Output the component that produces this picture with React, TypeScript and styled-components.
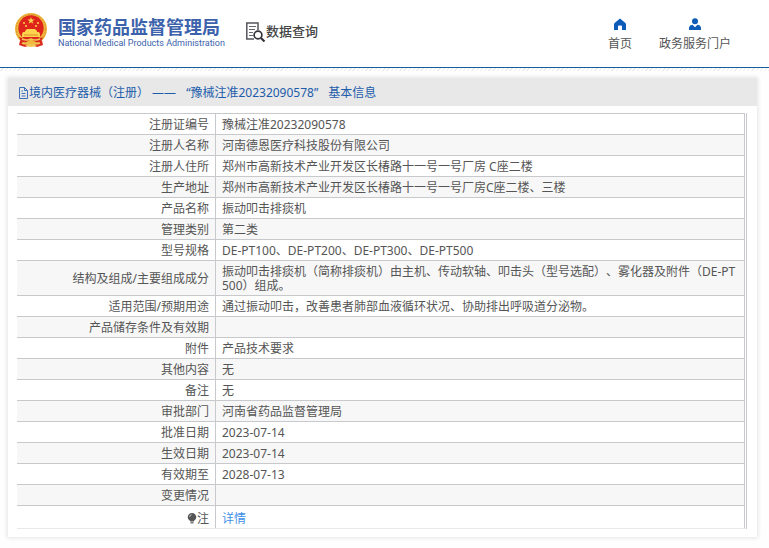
import React from "react";
import styled, { createGlobalStyle } from "styled-components";

const GlobalStyle = createGlobalStyle`
  * { box-sizing: border-box; }
  body {
    margin: 0;
    background: #fefefe;
    color: #555;
    font: 12px/14px "Noto Sans", "Noto Sans CJK SC", sans-serif;
    text-spacing-trim: space-all;
  }
`;

const Header = styled.header`
  display: flex;
  align-items: flex-start;
  height: 68px;
  background: #fff;
  border-bottom: 1px solid #14609f;
`;

const Hatch = styled.div`
  height: 3px;
  margin-bottom: 7px;
  background: repeating-linear-gradient(135deg, #fff 0 2px, #ececea 2px 3px);
`;

const Brand = styled.a`
  display: flex;
  gap: 10px;
  padding: 12px 0 0 14px;
  color: #3c62ab;
  text-decoration: none;
`;

const BrandText = styled.span`
  display: flex;
  flex-direction: column;
  padding-top: 3px;
`;

const BrandName = styled.strong`
  font: 700 18px/22px "Noto Sans CJK SC", sans-serif;
  white-space: nowrap;
`;

const BrandSub = styled.span`
  font: 400 9px/13px Roboto, sans-serif;
  white-space: nowrap;
`;

const Section = styled.h1`
  display: flex;
  align-items: center;
  margin: 20px 0 0 20px;
  color: #444;
  font: 500 13px/22px "Noto Sans CJK SC", sans-serif;
`;

const Nav = styled.nav`
  display: flex;
  gap: 27px;
  margin: 18px 38px 0 auto;
`;

const NavLink = styled.a`
  display: flex;
  flex-direction: column;
  align-items: center;
  gap: 7px;
  color: #555;
  text-decoration: none;
`;

const Card = styled.main`
  margin: 0 12px 11px 8px;
  background: #fff;
  box-shadow: 0 0 4px 1px #e4e4e4;
`;

const CardTitle = styled.h2`
  display: flex;
  align-items: center;
  height: 28px;
  margin: 0;
  padding: 2px 10px 0;
  background: #e8e8e8;
  color: #1c5cab;
  font: inherit;
`;

const RecordNumber = styled.span`
  margin: 0 10px;
`;

const CardBody = styled.div`
  padding: 7px 10px 8px 9px;
`;

const Table = styled.table`
  width: 100%;
  border-collapse: separate;
  border-spacing: 0;
  border-right: 3px double #c8c9cc;
  border-bottom: 1px solid #e9e9ec;
`;

const Row = styled.tr`
  &:nth-child(even) { background: #f7f7f7; }
  &:last-child > * { padding-top: 6px; }
`;

const Label = styled.th`
  width: 199px;
  padding: 4px 6px 2px;
  border-top: 1px solid #c8c9cc;
  border-right: 1px solid #c8c9cc;
  font-weight: 400;
  text-align: right;
`;

const Value = styled.td`
  padding: 4px 6px 2px;
  border-top: 1px solid #c8c9cc;
  word-break: break-all;
`;

const DetailLink = styled.a`
  color: #3f8fe8;
  text-decoration: none;
`;

const BulbIcon = styled.svg`
  vertical-align: -1px;
`;

const Emblem = () => (
  <svg width="34" height="36" viewBox="0 0 34 36" aria-hidden="true">
    <path d="M7 24 5 33l6 2 6-2 6 2 6-2-2-9z" fill="#d92b20" />
    <circle cx="17" cy="17" r="16" fill="#efb83c" />
    <circle cx="17" cy="16" r="12.7" fill="#de241b" />
    <circle cx="17" cy="17" r="14.7" fill="none" stroke="#d9922c" strokeWidth="1" strokeDasharray="2 1" />
    <path d="m17 5 .9 2.6h2.7l-2.2 1.6.9 2.6-2.3-1.6-2.3 1.6.9-2.6-2.2-1.6h2.7z" fill="#ffd34d" />
    <g fill="#ffd34d">
      <circle cx="10" cy="11" r="1" />
      <circle cx="12" cy="14" r="1" />
      <circle cx="22" cy="14" r="1" />
      <circle cx="24" cy="11" r="1" />
      <path d="m11 19 2-2h8l2 2v1H11zM8 22l1-2h16l1 2v3H8z" />
    </g>
    <path d="M10 23h14" stroke="#d9922c" strokeWidth="1" />
    <path d="M5 25q6 3 12 1 6 2 12-1l-2 5q-5 1-7-1l-3 2-3-2q-2 2-7 1z" fill="#d92b20" />
    <path d="M8 27q5 2 9 0 4 2 9 0M8 31q5 2 7-1h4q2 3 7 1" fill="none" stroke="#f3c654" strokeWidth="1.6" />
    <circle cx="17" cy="30" r="2.6" fill="#efb83c" />
    <path d="m11 34 3-2h6l3 2-6 1z" fill="#f3c654" />
  </svg>
);

const QueryIcon = () => (
  <svg width="21" height="21" viewBox="0 0 21 21" fill="none" aria-hidden="true">
    <path d="M9 18H1.800V2H13v7" stroke="#55555f" strokeWidth="1.500" />
    <path d="M4 5.500h7M4 8.500h6M4 11.500h4M4 14.500h4" stroke="#666670" strokeWidth="1" />
    <circle cx="13" cy="14" r="3.900" fill="#fff" stroke="#33333d" strokeWidth="1.700" />
    <path d="m16 17 3.500 3.500" stroke="#33333d" strokeWidth="2.200" />
  </svg>
);

const HomeIcon = () => (
  <svg width="12" height="12" viewBox="0 0 12 12" aria-hidden="true">
    <path d="M6 .5.600 5Q0 5.500 0 6.500V12h4V8.500q0-1 1-1h2q1 0 1 1V12h4V6.500Q12 5.500 11.400 5z" fill="#0c5cb8" />
  </svg>
);

const UserIcon = () => (
  <svg width="12" height="12" viewBox="0 0 12 12" aria-hidden="true">
    <circle cx="6" cy="3.200" r="3" fill="#0c5cb8" />
    <path d="M0 12V9.500Q.5 7 3.500 6.700L6 9.200l2.500-2.500Q11.500 7 12 9.500V12z" fill="#0c5cb8" />
  </svg>
);

const DocIcon = () => (
  <svg width="11" height="12" viewBox="0 0 11 12" fill="none" stroke="#3a70b8" aria-hidden="true">
    <path d="M1.500.500h5L9.500 3.500v8h-8zM6.500.500v3h3M3.500 6.500h4M3.500 9h4M3.500 4H5" />
  </svg>
);

const Bulb = () => (
  <BulbIcon width="10" height="11" viewBox="0 0 10 11" aria-hidden="true">
    <path d="M5 0a4.300 4.300 0 0 1 4.300 4.300C9.300 6.500 7 7.200 6.800 8.500H3.200C3 7.200.7 6.500.7 4.300A4.300 4.300 0 0 1 5 0z" fill="#555" />
    <path d="M3.500 9.800h3" stroke="#555" strokeWidth="1.200" />
    <path d="M2.600 4q0-2 2-2.300" stroke="#ddd" fill="none" strokeWidth=".8" />
  </BulbIcon>
);

const records: [string, string][] = [
  ["注册证编号", "豫械注准20232090578"],
  ["注册人名称", "河南德恩医疗科技股份有限公司"],
  ["注册人住所", "郑州市高新技术产业开发区长椿路十一号一号厂房 C座二楼"],
  ["生产地址", "郑州市高新技术产业开发区长椿路十一号一号厂房C座二楼、三楼"],
  ["产品名称", "振动叩击排痰机"],
  ["管理类别", "第二类"],
  ["型号规格", "DE-PT100、DE-PT200、DE-PT300、DE-PT500"],
  ["结构及组成/主要组成成分", "振动叩击排痰机（简称排痰机）由主机、传动软轴、叩击头（型号选配）、雾化器及附件（DE-PT500）组成。"],
  ["适用范围/预期用途", "通过振动叩击，改善患者肺部血液循环状况、协助排出呼吸道分泌物。"],
  ["产品储存条件及有效期", ""],
  ["附件", "产品技术要求"],
  ["其他内容", "无"],
  ["备注", "无"],
  ["审批部门", "河南省药品监督管理局"],
  ["批准日期", "2023-07-14"],
  ["生效日期", "2023-07-14"],
  ["有效期至", "2028-07-13"],
  ["变更情况", ""],
];

export default function App() {
  return (
    <>
      <GlobalStyle />
      <Header>
        <Brand href="#">
          <Emblem />
          <BrandText>
            <BrandName>国家药品监督管理局</BrandName>
            <BrandSub>National Medical Products Administration</BrandSub>
          </BrandText>
        </Brand>
        <Section>
          <QueryIcon />
          数据查询
        </Section>
        <Nav>
          <NavLink href="#">
            <HomeIcon />
            首页
          </NavLink>
          <NavLink href="#">
            <UserIcon />
            政务服务门户
          </NavLink>
        </Nav>
      </Header>
      <Hatch />
      <Card>
        <CardTitle>
          <DocIcon />
          境内医疗器械（注册） ——
          <RecordNumber>“豫械注准20232090578”</RecordNumber>
          基本信息
        </CardTitle>
        <CardBody>
          <Table>
            <tbody>
              {records.map(([label, value]) => (
                <Row key={label}>
                  <Label scope="row">{label}</Label>
                  <Value>{value}</Value>
                </Row>
              ))}
              <Row>
                <Label scope="row">
                  <Bulb />注
                </Label>
                <Value>
                  <DetailLink href="#">详情</DetailLink>
                </Value>
              </Row>
            </tbody>
          </Table>
        </CardBody>
      </Card>
    </>
  );
}
